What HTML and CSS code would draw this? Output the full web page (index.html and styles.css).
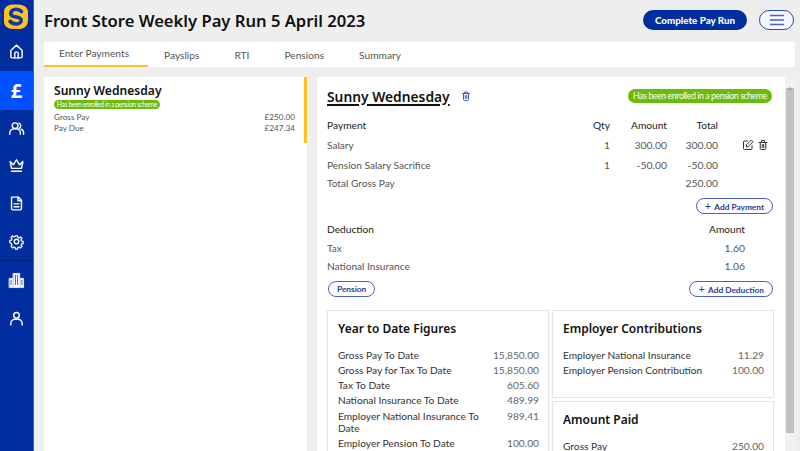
FILE: index.html
```html
<!DOCTYPE html>
<html lang="en">
<head>
    <meta charset="UTF-8">
    <title>Front Store Weekly Pay Run</title>
    <link rel="stylesheet" href="styles.css">
</head>
<body>
    <nav class="sidebar">
        <div class="logo">
            <svg width="26" height="27" viewBox="0 0 26 27">
                <path d="M10 1.500C17 1 25 2 25 9V17C25 24 20 26.500 14 26C7 26.500 1 25 1 18V9C1 4 5 1.500 10 1.500Z" fill="#fdc21e"/>
                <path d="M18.500 8.500C17 7 15 6.200 13 6.200C10 6.200 7.800 8 7.800 10.500C7.800 13 10 13.500 13 14C16 14.500 18.200 15 18.200 17.300C18.200 19.800 15.500 21 13 21C10.500 21 8.500 20 7 18.300" fill="none" stroke="#0b3aa6" stroke-width="3.600" stroke-linecap="round"/>
            </svg>
        </div>
        <a class="nav-item">
            <svg viewBox="0 0 24 24"><path d="M4 10.500 12 3l8 7.500V19a2 2 0 0 1-2 2H6a2 2 0 0 1-2-2Z"/><path d="M9.500 21v-6a2.500 2.500 0 0 1 5 0v6"/></svg>
        </a>
        <a class="nav-item active"><span class="pound">£</span></a>
        <a class="nav-item people">
            <svg viewBox="0 0 24 24"><circle cx="10" cy="8" r="4"/><path d="M2.500 20v-1.500a6 6 0 0 1 6-6h3a6 6 0 0 1 6 6V20"/><path d="M15.500 4.300a4 4 0 0 1 0 7.400M18.500 13a5.500 5.500 0 0 1 3.500 5.500V20"/></svg>
        </a>
        <a class="nav-item">
            <svg viewBox="0 0 24 24"><path d="M3 6.500 7.500 11 12 4l4.500 7L21 6.500 19 16H5Z"/><path d="M5 20h14"/></svg>
        </a>
        <a class="nav-item">
            <svg viewBox="0 0 24 24"><path d="M5 3h9.500L19 7.500V19a2 2 0 0 1-2 2H7a2 2 0 0 1-2-2Z"/><path d="M14 3v5h5M8.500 12.500h7M8.500 16.500h7"/></svg>
        </a>
        <a class="nav-item">
            <svg viewBox="0 0 24 24"><circle cx="12" cy="12" r="3.200"/><path d="M10.300 3h3.400l.5 2.600 1.800.8 2.200-1.500 2.400 2.400-1.500 2.200.8 1.800 2.600.5v3.400l-2.600.5-.8 1.800 1.500 2.200-2.400 2.400-2.200-1.500-1.800.8-.5 2.600h-3.400l-.5-2.600-1.800-.8-2.200 1.500-2.400-2.400 1.500-2.200-.8-1.800L1.500 13.700v-3.400l2.600-.5.8-1.800-1.500-2.200 2.400-2.400 2.200 1.500 1.800-.8Z" transform="translate(1.200 1.200) scale(.9)"/></svg>
        </a>
        <div class="nav-divider"></div>
        <a class="nav-item">
            <svg viewBox="0 0 24 24"><path class="solid" d="M7.500 2h9v20h-9ZM2 9h4.500v13H2ZM17.500 9H22v13h-4.500Z"/><path class="cut" d="M10.500 5v14M13.500 5v14M4.300 12v7M19.700 12v7"/></svg>
        </a>
        <a class="nav-item">
            <svg viewBox="0 0 24 24"><circle cx="12" cy="7.500" r="4"/><path d="M4 21v-2a6 6 0 0 1 6-6h4a6 6 0 0 1 6 6v2"/></svg>
        </a>
    </nav>

    <div class="main">
        <header class="topbar">
            <h1>Front Store Weekly Pay Run 5 April 2023</h1>
            <button class="btn-primary">Complete Pay Run</button>
            <button class="btn-menu">
                <svg width="16" height="12" viewBox="0 0 16 12"><path d="M1 1.500h14M1 6h14M1 10.500h14"/></svg>
            </button>
        </header>

        <div class="tabs">
            <div class="tab selected">Enter Payments</div>
            <div class="tab">Payslips</div>
            <div class="tab">RTI</div>
            <div class="tab">Pensions</div>
            <div class="tab">Summary</div>
        </div>

        <div class="content">
            <aside class="list-panel">
                <div class="employee selected">
                    <h2>Sunny Wednesday</h2>
                    <span class="pill small">Has been enrolled in a pension scheme</span>
                    <div class="summary-row first"><span>Gross Pay</span><span>£250.00</span></div>
                    <div class="summary-row"><span>Pay Due</span><span>£247.34</span></div>
                </div>
            </aside>

            <section class="detail-wrap">
                <div class="detail">
                    <div class="detail-head">
                        <h2 class="underlined">Sunny Wednesday</h2>
                        <svg class="icon bin-blue" viewBox="0 0 24 24"><path d="M5 7h14M9 7V4h6v3M7 7v12a2 2 0 0 0 2 2h6a2 2 0 0 0 2-2V7M10.500 11v6M13.500 11v6"/></svg>
                        <span class="pill">Has been enrolled in a pension scheme</span>
                    </div>

                    <div class="payments">
                        <div class="th">Payment</div><div class="th num">Qty</div><div class="th num">Amount</div><div class="th num">Total</div><div></div>
                        <div class="label">Salary</div><div class="num">1</div><div class="num">300.00</div><div class="num">300.00</div>
                        <div class="actions">
                            <svg class="icon" viewBox="0 0 24 24"><path d="M20 13v6a2 2 0 0 1-2 2H5a2 2 0 0 1-2-2V6a2 2 0 0 1 2-2h6"/><path d="M9 15v-3.500L18.500 2 22 5.500 12.500 15Z"/></svg>
                            <svg class="icon" viewBox="0 0 24 24"><path d="M4 7h16M9 7V3h6v4M6.500 7v12a2 2 0 0 0 2 2h7a2 2 0 0 0 2-2V7M10.500 11v6M13.500 11v6"/></svg>
                        </div>
                        <div class="label">Pension Salary Sacrifice</div><div class="num">1</div><div class="num">-50.00</div><div class="num">-50.00</div><div></div>
                        <div class="label">Total Gross Pay</div><div></div><div></div><div class="num">250.00</div><div></div>
                    </div>

                    <div class="btn-row end payment-btn">
                        <button class="btn-outline"><span class="plus">+</span> Add Payment</button>
                    </div>

                    <div class="deductions">
                        <div class="th">Deduction</div><div class="th num">Amount</div>
                        <div class="label">Tax</div><div class="num">1.60</div>
                        <div class="label">National Insurance</div><div class="num">1.06</div>
                    </div>

                    <div class="btn-row between">
                        <button class="btn-outline pension">Pension</button>
                        <button class="btn-outline"><span class="plus">+</span> Add Deduction</button>
                    </div>

                    <div class="cards">
                        <div class="card ytd">
                            <h3>Year to Date Figures</h3>
                            <div class="card-row"><span>Gross Pay To Date</span><b>15,850.00</b></div>
                            <div class="card-row"><span>Gross Pay for Tax To Date</span><b>15,850.00</b></div>
                            <div class="card-row"><span>Tax To Date</span><b>605.60</b></div>
                            <div class="card-row"><span>National Insurance To Date</span><b>489.99</b></div>
                            <div class="card-row"><span>Employer National Insurance To Date</span><b>989.41</b></div>
                            <div class="card-row"><span>Employer Pension To Date</span><b>100.00</b></div>
                        </div>
                        <div class="card-stack">
                            <div class="card contributions">
                                <h3>Employer Contributions</h3>
                                <div class="card-row"><span>Employer National Insurance</span><b>11.29</b></div>
                                <div class="card-row"><span>Employer Pension Contribution</span><b>100.00</b></div>
                            </div>
                            <div class="card">
                                <h3>Amount Paid</h3>
                                <div class="card-row"><span>Gross Pay</span><b>250.00</b></div>
                            </div>
                        </div>
                    </div>
                </div>
                <div class="scrollbar"><div class="scroll-arrow"></div><div class="scroll-thumb"></div></div>
            </section>
        </div>
    </div>
</body>
</html>
```

FILE: styles.css
```css
* {
    margin: 0;
    padding: 0;
    box-sizing: border-box;
}

html, body {
    height: 451px;
    overflow: hidden;
}

body {
    display: flex;
    background-color: #eeeeee;
    color: #555555;
    font-family: Lato, "Liberation Sans", sans-serif;
    font-size: 10.400px;
}

button {
    font-family: inherit;
    cursor: pointer;
}

/* sidebar */
.sidebar {
    width: 34px;
    flex: none;
    height: 100%;
    background-color: #002e9e;
    border-right: 1px solid #3f5cc0;
    display: flex;
    flex-direction: column;
}

.logo {
    height: 32px;
    padding: 3px 0 0 3px;
}

.nav-item {
    height: 38px;
    display: flex;
    align-items: center;
    justify-content: center;
}

.logo + .nav-item,
.nav-item.active {
    height: 39px;
}

.nav-item.people {
    height: 36px;
}

.nav-item svg {
    width: 17px;
    height: 17px;
    fill: none;
    stroke: #ffffff;
    stroke-width: 2;
    stroke-linejoin: round;
    stroke-linecap: round;
}

.nav-item svg .solid {
    fill: #ffffff;
    stroke-width: 1;
}

.nav-item svg .cut {
    stroke: #002e9e;
    stroke-width: 1.200;
    stroke-dasharray: 2 1.500;
}

.nav-item.active {
    background-color: #0050ff;
}

.pound {
    color: #ffffff;
    font-family: "Noto Sans", sans-serif;
    font-weight: 700;
    font-size: 20px;
    line-height: 1;
}

.nav-divider {
    height: 1px;
    background-color: #00237a;
}

/* main */
.main {
    flex: 1;
    min-width: 0;
    padding: 0 5px 0 10px;
    display: flex;
    flex-direction: column;
}

.topbar {
    height: 42px;
    display: flex;
    align-items: center;
    padding-bottom: 2px;
}

h1 {
    font-family: "Noto Sans", sans-serif;
    font-weight: 600;
    font-size: 16.600px;
    color: #111111;
    margin-right: auto;
}

.btn-primary {
    width: 104px;
    height: 20px;
    border: none;
    border-radius: 10px;
    background-color: #002e9e;
    color: #ffffff;
    font-weight: 900;
    font-size: 9.800px;
}

.btn-menu {
    width: 35px;
    height: 20px;
    margin-left: 12px;
    margin-right: 1px;
    border: 1px solid #2a4bb0;
    border-radius: 10px;
    background: #f6f7fc;
    display: flex;
    align-items: center;
    justify-content: center;
}

.btn-menu svg {
    fill: none;
    stroke: #4a62b8;
    stroke-width: 1.500;
}

.tabs {
    height: 25px;
    background-color: #ffffff;
    display: flex;
    font-size: 10.200px;
    color: #555555;
}

.tab {
    padding: 1px 17.500px 0;
    display: flex;
    align-items: center;
}

.tab.selected {
    width: 104px;
    padding: 0 15px 1px;
    margin-right: -1.500px;
    border-bottom: 2px solid #fdc21e;
    white-space: nowrap;
}

.content {
    margin-top: 10px;
    flex: 1;
    min-height: 0;
    display: flex;
    gap: 10px;
}

/* employee list */
.list-panel {
    width: 263px;
    flex: none;
    background-color: #ffffff;
}

.employee {
    height: 66px;
    padding: 5px 9px 0 10px;
    border-right: 3px solid #fdc21e;
}

h2 {
    font-family: "Noto Sans", sans-serif;
    font-weight: 600;
    font-size: 12.100px;
    line-height: 17px;
    color: #111111;
}

.pill {
    display: inline-block;
    background-color: #6cbb0a;
    color: #ffffff;
    border-radius: 7px;
    font-size: 8.800px;
    letter-spacing: -.43px;
    line-height: 14px;
    padding: 0 5px;
    white-space: nowrap;
}

.pill.small {
    display: block;
    width: fit-content;
    font-size: 6.600px;
    letter-spacing: -.33px;
    line-height: 9px;
    padding: 0 3px;
    margin-top: 1px;
}

.summary-row {
    display: flex;
    justify-content: space-between;
    font-size: 8.200px;
    line-height: 11px;
}

.summary-row.first {
    margin-top: 3px;
}

/* pay detail */
.detail-wrap {
    flex: 1;
    min-width: 0;
    display: flex;
    background-color: #ffffff;
}

.detail {
    flex: 1;
    min-width: 0;
    padding: 8px 11px 0 10px;
    overflow: hidden;
}

.detail-head {
    display: flex;
    align-items: center;
    height: 22px;
}

.underlined {
    font-size: 13.800px;
    text-decoration: underline;
    text-decoration-thickness: 1.500px;
    text-underline-offset: 2px;
}

.icon {
    width: 12px;
    height: 12px;
    fill: none;
    stroke: #333333;
    stroke-width: 2;
    stroke-linejoin: round;
    stroke-linecap: round;
}

.icon.bin-blue {
    margin-left: 10px;
    stroke: #3f5cb0;
}

.detail-head .pill {
    margin-left: auto;
    margin-right: 2px;
}

.payments {
    margin-top: 8px;
    display: grid;
    grid-template-columns: 1fr 43px 57px 51px 56px;
    grid-template-rows: 20px 20px 20px 16px;
    align-items: center;
}

.th {
    color: #222222;
    font-size: 10.200px;
}

.label {
    font-size: 10.100px;
}

.num {
    text-align: right;
}

.actions {
    display: flex;
    justify-content: flex-end;
    gap: 3.500px;
    padding-right: 5px;
}

.btn-row {
    display: flex;
    padding-right: 1px;
}

.btn-row.end {
    justify-content: flex-end;
}

.btn-row.between {
    justify-content: space-between;
    margin-top: 6px;
}

.payment-btn {
    margin-top: 7px;
}

.btn-outline {
    height: 16px;
    padding: 0 8px;
    border: 1px solid #4a62b8;
    border-radius: 8px;
    background: #ffffff;
    color: #24408f;
    font-size: 8.300px;
    font-weight: 700;
    white-space: nowrap;
}

.btn-outline.pension {
    margin-left: 1px;
}

.plus {
    font-size: 11px;
    font-weight: 400;
    line-height: 1;
    margin-right: 1.500px;
}

.deductions {
    margin-top: 6px;
    display: grid;
    grid-template-columns: 1fr auto;
    grid-template-rows: 18px 19px 18px;
    align-items: center;
    padding-right: 29px;
}

.cards {
    margin-top: 13px;
    display: grid;
    grid-template-columns: 222px 222px;
    gap: 3px;
}

.card-stack {
    display: flex;
    flex-direction: column;
    gap: 3px;
}

.card {
    border: 1px solid #e6e6e6;
    padding: 9px 9px 0 10px;
}

.card.contributions {
    height: 88px;
}

h3 {
    font-family: "Noto Sans", sans-serif;
    font-weight: 600;
    font-size: 12px;
    line-height: 17px;
    color: #111111;
    margin-bottom: 11.500px;
}

.card-row {
    display: flex;
    justify-content: space-between;
    gap: 10px;
    font-size: 10.200px;
    line-height: 12px;
    padding-bottom: 3.300px;
    color: #333333;
}

.card-row b {
    font-weight: 400;
    color: #666666;
}

.ytd .card-row span {
    max-width: 160px;
}

/* scrollbar */
.scrollbar {
    width: 10px;
    flex: none;
    background-color: #f1f1f1;
}

.scroll-arrow {
    height: 10px;
    width: 0;
    margin: 0 auto;
    border-left: 3px solid transparent;
    border-right: 3px solid transparent;
    border-bottom: 3px solid #a3a3a3;
    transform: translateY(3px);
}

.scroll-thumb {
    height: 345px;
    background-color: #c1c1c1;
    margin: 1px 1px 0;
}
```
